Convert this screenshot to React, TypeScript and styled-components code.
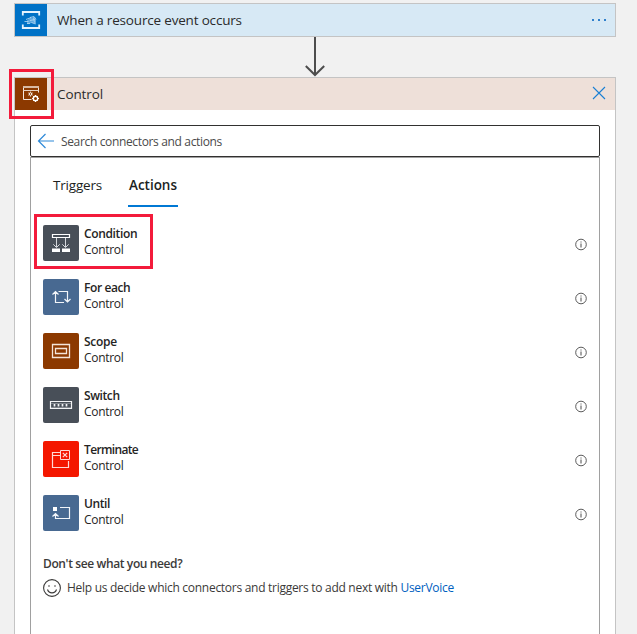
import React from "react";
import styled, { createGlobalStyle, css } from "styled-components";

const GlobalStyle = createGlobalStyle`
  * { box-sizing: border-box; }
  html, body { margin: 0; height: 100%; overflow: hidden; background: #f1f1f1; }
  body { font-family: "Open Sans", "Noto Sans", sans-serif; color: #323130; }
  svg { display: block; }
`;

const Canvas = styled.main`
  height: 634px;
  width: 637px;
  padding: 3px 21px 0 14px;
  display: flex;
  flex-direction: column;
  overflow: hidden;
  background: #f1f1f1;
`;

const Card = styled.section<{ $grow?: boolean }>`
  flex: ${(p) => (p.$grow ? "1 0 auto" : "0 0 auto")};
  display: flex;
  flex-direction: column;
  border: 1px solid #c4c4c4;
  ${(p) => p.$grow && css`border-bottom: 0;`}
  background: #fff;
`;

const CardHeader = styled.header<{ $bg: string }>`
  height: 32px;
  display: flex;
  align-items: center;
  background: ${(p) => p.$bg};
`;

const HeaderIcon = styled.div<{ $bg: string }>`
  position: relative;
  width: 32px;
  height: 32px;
  flex: none;
  background: ${(p) => p.$bg};
`;

const Label = styled.span<{ $size: number; $spacing?: number; $weight?: number; $line?: number }>`
  font-size: ${(p) => p.$size}px;
  letter-spacing: ${(p) => p.$spacing ?? 0}px;
  font-weight: ${(p) => p.$weight ?? 400};
  line-height: ${(p) => p.$line ?? 20}px;
  white-space: nowrap;
`;

const HeaderTitle = styled(Label)`
  flex: 1;
  margin-left: 10px;
  color: #2b2b2b;
`;

const HeaderAction = styled.button`
  width: 18px;
  height: 18px;
  margin-right: 7px;
  padding: 0;
  border: 0;
  background: none;
`;

const Highlight = styled.div<{ $inset: string }>`
  position: absolute;
  inset: ${(p) => p.$inset};
  border: 3px solid #f31b3b;
  pointer-events: none;
`;

const Connector = styled.div`
  height: 40px;
  display: flex;
  justify-content: center;
`;

const Panel = styled.div`
  flex: 1;
  margin: 15px 15px 0;
  display: flex;
  flex-direction: column;
`;

const SearchBox = styled.div`
  height: 32px;
  flex: none;
  display: flex;
  align-items: center;
  gap: 6px;
  padding-left: 6px;
  border: 1px solid #323130;
  border-radius: 2px;
  color: #4a4a4a;
`;

const SearchText = styled(Label)`
  padding-top: 2px;
`;

const PanelBody = styled.div`
  flex: 1;
  border: 1px solid #a0a0a0;
  border-bottom: 0;
`;

const Tabs = styled.nav`
  height: 49px;
  display: flex;
  gap: 20px;
  padding-left: 17px;
`;

const Tab = styled.div<{ $active?: boolean }>`
  width: ${(p) => (p.$active ? 50 : 60)}px;
  padding: 15px 0 0 ${(p) => (p.$active ? 1 : 5)}px;
  border-bottom: 2px solid ${(p) => (p.$active ? "#0078d4" : "transparent")};
  color: #201f1e;
`;

const ActionList = styled.ul`
  list-style: none;
  margin: 0;
  padding: 9px 12px 0;
`;

const ActionRow = styled.li`
  position: relative;
  height: 54px;
  display: flex;
  padding-top: 9px;
`;

const Tile = styled.div<{ $bg: string }>`
  width: 36px;
  height: 36px;
  flex: none;
  border-radius: 2px;
  background: ${(p) => p.$bg};
`;

const ActionText = styled.div`
  flex: 1;
  display: flex;
  flex-direction: column;
  padding-top: 1px;
  margin-left: 5px;
  color: #252423;
`;

const InfoSlot = styled.div`
  padding-top: 13px;
`;

const Footer = styled.footer`
  padding: 14px 12px 0;
  display: flex;
  flex-direction: column;
  color: #3b3a39;
`;

const FooterLine = styled.div`
  display: flex;
  align-items: center;
  gap: 5px;
  margin-top: 4px;
`;

const Link = styled.a`
  color: #0060c0;
`;

const EventGridIcon = () => (
  <svg width="32" height="32" fill="none" stroke="#b9daf3">
    <path d="M7.800 11.500V8h16.400v3.500M7.800 20.500V24h16.400v-3.500" strokeWidth="1.800" stroke="#e5f3fd" />
    <path d="M12 16.500l3-2.500 5-1 1 3v4l-4-1-5 1z" fill="#5da8e0" stroke="none" />
    <path d="M9.500 17.500h4M11 15.500l5-2M12 19.500h3M15 13.500l4-1 2 3M15 16.500l5-1M16.500 18.500l4 1.500M18.500 13.500l1 5" strokeWidth=".8" />
  </svg>
);

const ControlIcon = () => (
  <svg width="32" height="32" fill="none" stroke="#fff">
    <path d="M16.500 21.500h-8v-13h15v6" stroke="#f3e7df" />
    <path d="M8 9h16" strokeWidth="2" stroke="#d9b9a3" />
    <path d="M8 12.500h16" stroke="#e8d3c5" />
    <circle cx="15.500" cy="16" r="1.300" />
    <path d="M15.500 13.500v1M15.500 17.500v1.200M13.300 14.800l1 .5M16.700 16.700l1 .6M17.700 14.800l-1 .5M14.300 16.700l-1 .6" strokeWidth=".7" />
    <circle cx="20.500" cy="20.500" r="2.200" strokeWidth="1.400" />
    <path d="M20.500 17v1M20.500 23v1M17 20.500h1M23 20.500h1M18 18l.8.8M22.200 22.200l.8.8M23 18l-.8.8M18.800 22.200l-.8.8" />
  </svg>
);

const ConditionIcon = () => (
  <svg width="36" height="36" fill="none" stroke="#fff">
    <path d="M9.500 9.500h17v3h-17z" strokeWidth="1.200" />
    <path d="M13.500 13v9M22.500 13v9M10.300 19.300l3.200 3.200 3.200-3.200M19.300 19.300l3.200 3.200 3.200-3.200" stroke="#d5d8dc" />
    <path d="M9 23.500h8V27H9zM19 23.500h8V27h-8z" fill="#fff" stroke="none" />
  </svg>
);

const ForEachIcon = () => (
  <svg width="36" height="36" fill="none" stroke="#f2f5f9" strokeWidth="1.200">
    <path d="M12.500 13v10.500H21M15.500 12.500h9v10M9.500 15.500l3-3 3 3M21.500 20l3 3 3-3" />
  </svg>
);

const ScopeIcon = () => (
  <svg width="36" height="36" fill="none" stroke="#f4e5da">
    <path d="M9.500 11.500h17v13h-17z" strokeWidth="1.300" />
    <path d="M12.500 15.500h11v5h-11z" strokeWidth="1.300" />
  </svg>
);

const SwitchIcon = () => (
  <svg width="36" height="36" fill="none" stroke="#f2f3f5">
    <path d="M7.500 14.500h21v7h-21z" strokeWidth="1.200" />
    <path d="M8 16.500h20M8 20.500h20" stroke="#a9adb3" strokeWidth=".6" />
    <path d="M11.500 17v2.500M15.500 17v2.500M19.500 17v2.500M23.500 17v2.500" strokeWidth="1.700" />
  </svg>
);

const TerminateIcon = () => (
  <svg width="36" height="36" fill="none" stroke="#ffd9d5">
    <path d="M17 11.500H9.500v15h16V20M9.500 14.500H17" strokeWidth="1.200" />
    <path d="M17.500 9.500h9v9h-9z" />
    <path d="M19.800 11.800l4.400 4.400M24.200 11.800l-4.400 4.400" strokeWidth="1.200" />
  </svg>
);

const UntilIcon = () => (
  <svg width="36" height="36" fill="none" stroke="#f2f5f9" strokeWidth="1.200">
    <path d="M10 12h4v4h-4z" fill="#fff" stroke="none" />
    <path d="M17 12.500h9.500v11h-14V19M9.500 21.500l3-3 3 3" />
  </svg>
);

const InfoIcon = () => (
  <svg width="12" height="13" fill="none" stroke="#4a4a4a">
    <circle cx="6" cy="6.500" r="5.300" strokeWidth=".9" />
    <path d="M6 5.500v4M6 3.500v1" />
  </svg>
);

const SmileIcon = () => (
  <svg width="19" height="20" fill="none" stroke="#3b3a39">
    <circle cx="9" cy="10" r="8.400" strokeWidth="1.100" />
    <path d="M4.500 11.500c1.500 4.500 7.500 4.500 9 0" strokeWidth="1.100" />
    <circle cx="6" cy="8" r=".8" fill="#3b3a39" stroke="none" />
    <circle cx="12" cy="8" r=".8" fill="#3b3a39" stroke="none" />
  </svg>
);

const actions = [
  { name: "Condition", color: "#484f58", icon: <ConditionIcon />, spacing: -0.35, highlighted: true },
  { name: "For each", color: "#486991", icon: <ForEachIcon />, spacing: -0.4 },
  { name: "Scope", color: "#8c3900", icon: <ScopeIcon />, spacing: -0.3 },
  { name: "Switch", color: "#484f58", icon: <SwitchIcon />, spacing: -0.4 },
  { name: "Terminate", color: "#f41700", icon: <TerminateIcon />, spacing: -0.65 },
  { name: "Until", color: "#486991", icon: <UntilIcon />, spacing: -0.4 },
];

export default function App() {
  return (
    <>
      <GlobalStyle />
      <Canvas>
        <Card>
          <CardHeader $bg="#d7e9f5">
            <HeaderIcon $bg="#0072c6"><EventGridIcon /></HeaderIcon>
            <HeaderTitle $size={13.5} $spacing={-0.18}>When a resource event occurs</HeaderTitle>
            <HeaderAction aria-label="More">
              <svg width="18" height="18" fill="#2f80cc">
                <path d="M2 8h2v2H2zM8 8h2v2H8zM14 8h2v2h-2z" />
              </svg>
            </HeaderAction>
          </CardHeader>
        </Card>
        <Connector>
          <svg width="22" height="40" fill="none" stroke="#4d4d4d" strokeWidth="2">
            <path d="M11 0v38M1.800 29l9.200 9 9.200-9" />
          </svg>
        </Connector>
        <Card $grow>
          <CardHeader $bg="#eee0d9">
            <HeaderIcon $bg="#8c3900">
              <ControlIcon />
              <Highlight $inset="-9px -7px -9px -6px" />
            </HeaderIcon>
            <HeaderTitle $size={13.5} $spacing={-0.1}>Control</HeaderTitle>
            <HeaderAction aria-label="Close">
              <svg width="18" height="18" fill="none" stroke="#1a7fd4" strokeWidth="1.100">
                <path d="M3 2l12 12M15 2L3 14" />
              </svg>
            </HeaderAction>
          </CardHeader>
          <Panel>
            <SearchBox>
              <svg width="18" height="18" fill="none" stroke="#2f8ad8" strokeWidth="1.200">
                <path d="M17 9H1.500M8.500 2L1.500 9l7 7" />
              </svg>
              <SearchText $size={12} $spacing={-0.35}>Search connectors and actions</SearchText>
            </SearchBox>
            <PanelBody>
              <Tabs>
                <Tab><Label $size={13.5} $spacing={-0.2}>Triggers</Label></Tab>
                <Tab $active><Label $size={13.5} $weight={600} $spacing={-0.02}>Actions</Label></Tab>
              </Tabs>
              <ActionList>
                {actions.map((a) => (
                  <ActionRow key={a.name}>
                    <Tile $bg={a.color}>{a.icon}</Tile>
                    <ActionText>
                      <Label $size={12} $line={16} $weight={600} $spacing={a.spacing}>{a.name}</Label>
                      <Label $size={12} $line={16} $spacing={-0.3}>Control</Label>
                    </ActionText>
                    <InfoSlot><InfoIcon /></InfoSlot>
                    {a.highlighted && <Highlight $inset="-2px 434px 1px -9px" />}
                  </ActionRow>
                ))}
              </ActionList>
              <Footer>
                <Label $size={12} $weight={600} $spacing={-0.38}>Don't see what you need?</Label>
                <FooterLine>
                  <SmileIcon />
                  <Label $size={12} $spacing={-0.28}>Help us decide which connectors and triggers to add next with <Link>UserVoice</Link></Label>
                </FooterLine>
              </Footer>
            </PanelBody>
          </Panel>
        </Card>
      </Canvas>
    </>
  );
}
